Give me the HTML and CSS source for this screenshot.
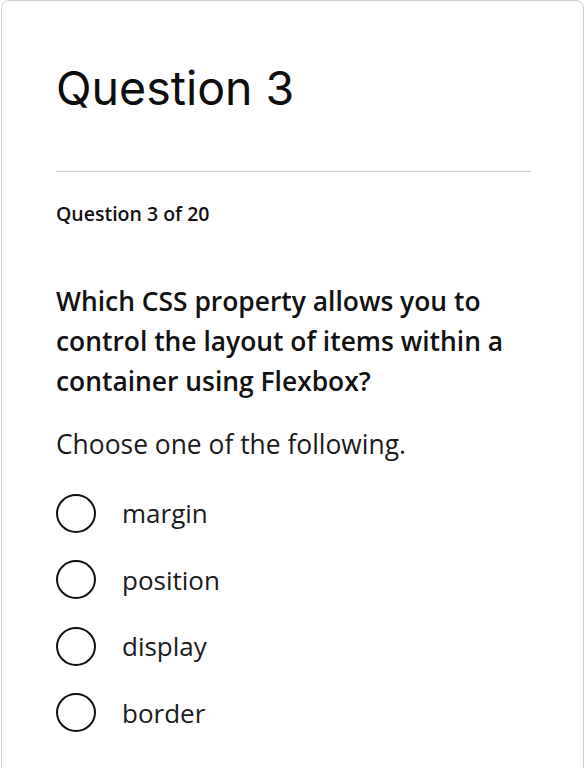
FILE: index.html
```html
<!DOCTYPE html>
<html lang="en">
<head>
<meta charset="utf-8">
<title>Question 3</title>
<link rel="stylesheet" href="styles.css">
</head>
<body>
<main class="card">
  <h1 class="title">Question 3</h1>
  <hr class="divider">
  <p class="counter">Question 3 of 20</p>
  <p class="question">Which CSS property allows you to control the layout of items within a container using Flexbox?</p>
  <p class="instruction">Choose one of the following.</p>
  <ul class="options">
    <li class="option"><span class="radio"></span><span class="label">margin</span></li>
    <li class="option"><span class="radio"></span><span class="label">position</span></li>
    <li class="option"><span class="radio"></span><span class="label">display</span></li>
    <li class="option"><span class="radio"></span><span class="label">border</span></li>
  </ul>
</main>
</body>
</html>
```
FILE: styles.css
```css
html, body {
  margin: 0;
  padding: 0;
  background: #ffffff;
}
body {
  font-family: "Open Sans", "Liberation Sans", sans-serif;
  color: #111111;
  padding: 0 4px 0 1px;
}
.card {
  border: 1px solid #cfcfcf;
  border-radius: 8px;
  padding: 57px 52px 60px 54px;
  min-height: 800px;
  box-sizing: border-box;
}
.title {
  margin: 0;
  font-family: Inter, "Liberation Sans", sans-serif;
  font-weight: 400;
  font-size: 46.5px;
  line-height: 60px;
  color: #0d0d0d;
}
.divider {
  border: 0;
  border-top: 1px solid #cccccc;
  margin: 53px 0 0;
}
.counter {
  margin: 28px 0 0;
  font-size: 19.5px;
  font-weight: 550;
  line-height: 28px;
}
.question {
  margin: 53px 0 0;
  font-size: 26.4px;
  font-weight: 600;
  line-height: 40px;
}
.instruction {
  margin: 25px 0 0;
  font-size: 26.4px;
  font-weight: 400;
  line-height: 36px;
  color: #1a1a1a;
}
.options {
  list-style: none;
  margin: 32px 0 0;
  padding: 0;
  display: flex;
  flex-direction: column;
  gap: 28.5px;
}
.option {
  display: flex;
  align-items: center;
  gap: 26px;
  height: 38px;
}
.radio {
  width: 40px;
  height: 39px;
  box-sizing: border-box;
  border: 2.5px solid #111111;
  border-radius: 50%;
  flex: none;
}
.label {
  font-size: 26px;
  line-height: 36px;
  color: #1a1a1a;
}
```
